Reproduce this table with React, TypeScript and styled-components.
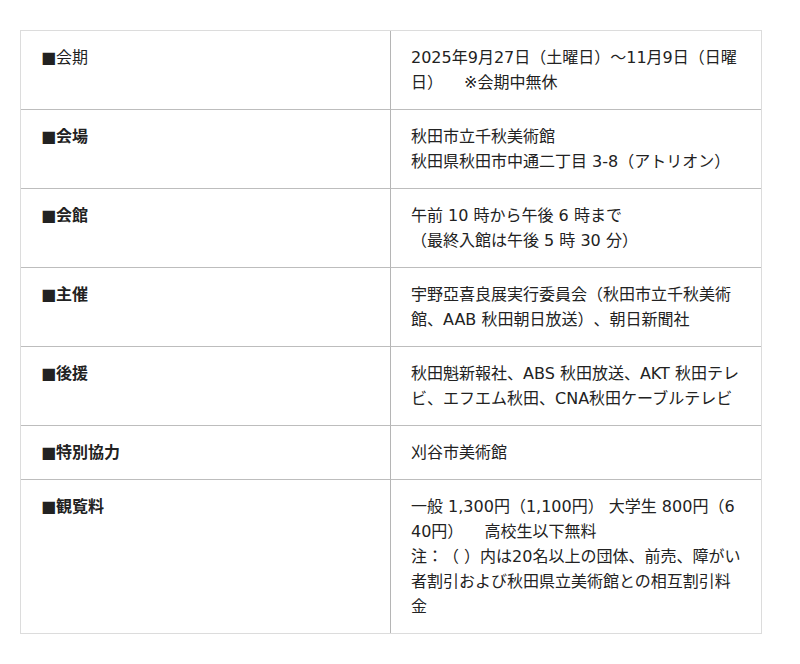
import React from "react";
import styled, { createGlobalStyle } from "styled-components";

const GlobalStyle = createGlobalStyle`
  body {
    margin: 0;
    background: #fff;
    font-family: "DejaVu Sans", "Noto Sans CJK JP", sans-serif;
    color: #222;
  }
`;

interface Row {
  label: string;
  lines: string[];
  regular?: boolean;
}

const rows: Row[] = [
  {
    label: "■会期",
    lines: ["2025年9月27日（土曜日）〜11月9日（日曜日）\u3000 ※会期中無休"],
    regular: true,
  },
  {
    label: "■会場",
    lines: ["秋田市立千秋美術館", "秋田県秋田市中通二丁目 3-8（アトリオン）"],
  },
  {
    label: "■会館",
    lines: ["午前 10 時から午後 6 時まで", "（最終入館は午後 5 時 30 分）"],
  },
  {
    label: "■主催",
    lines: ["宇野亞喜良展実行委員会（秋田市立千秋美術館、AAB 秋田朝日放送）、朝日新聞社"],
  },
  {
    label: "■後援",
    lines: ["秋田魁新報社、ABS 秋田放送、AKT 秋田テレビ、エフエム秋田、CNA秋田ケーブルテレビ"],
  },
  {
    label: "■特別協力",
    lines: ["刈谷市美術館"],
  },
  {
    label: "■観覧料",
    lines: [
      "一般 1,300円（1,100円） 大学生 800円（640円）\u3000 高校生以下無料",
      "注：（ ）内は20名以上の団体、前売、障がい者割引および秋田県立美術館との相互割引料金",
    ],
  },
];

function App() {
  return (
    <Page>
      <GlobalStyle />
      <InfoTable>
        <tbody>
          {rows.map((row) => (
            <tr key={row.label}>
              <LabelCell $regular={row.regular}>{row.label}</LabelCell>
              <ValueCell>
                {row.lines.map((line, i) => (
                  <Line key={i}>{line}</Line>
                ))}
              </ValueCell>
            </tr>
          ))}
        </tbody>
      </InfoTable>
    </Page>
  );
}

const Page = styled.div`
  padding: 30px 20px;
`;

const InfoTable = styled.table`
  width: 742px;
  border-collapse: separate;
  border-spacing: 0;
  table-layout: fixed;
  border: 1px solid #dcdcdc;

  tr + tr td {
    border-top: 1px solid #bdbdbd;
  }
`;

const Cell = styled.td`
  vertical-align: top;
  padding: 14px 20px;
  font-size: 16px;
  line-height: 25px;
  color: #222;
  text-spacing-trim: space-all;
`;

const LabelCell = styled(Cell)<{ $regular?: boolean }>`
  width: 370px;
  box-sizing: border-box;
  padding-left: 20px;
  font-weight: ${(props) => (props.$regular ? 400 : 700)};
  border-right: 1px solid #b5b5b5;
`;

const ValueCell = styled(Cell)`
  word-break: break-all;
`;

const Line = styled.div`
  margin: 0;
`;

export default App;
